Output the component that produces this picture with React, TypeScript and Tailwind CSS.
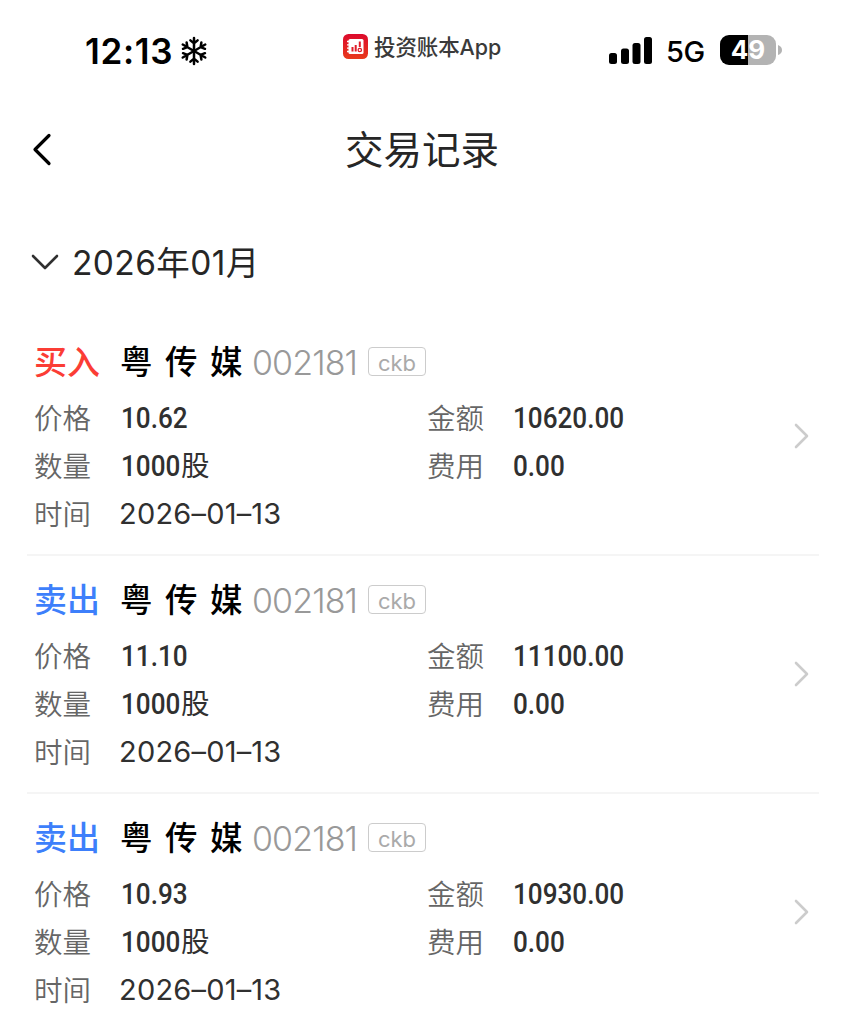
type Trade = { side: 'buy' | 'sell'; price: string; amount: string };

const trades: Trade[] = [
  { side: 'buy', price: '10.62', amount: '10620.00' },
  { side: 'sell', price: '11.10', amount: '11100.00' },
  { side: 'sell', price: '10.93', amount: '10930.00' },
];

function Snowflake() {
  return (
    <svg className="ml-[7px] mt-px h-[30px] w-[28px]" viewBox="-14 -15 28 30" fill="none" stroke="#000" strokeWidth="2.5" strokeLinecap="round">
      {[0, 60, 120, 180, 240, 300].map((a) => (
        <path key={a} transform={`rotate(${a})`} d="M0 0V-13M0 -7.6L-3.6 -10.6M0 -7.6L3.6 -10.6" />
      ))}
    </svg>
  );
}

function AppIcon() {
  return (
    <svg className="h-[25px] w-[25px]" viewBox="0 0 25 25">
      <defs>
        <linearGradient id="appRed" x1="0" y1="0" x2="0" y2="1">
          <stop offset="0" stopColor="#dc0a2c" />
          <stop offset="1" stopColor="#e93a1c" />
        </linearGradient>
      </defs>
      <rect width="25" height="25" rx="5.5" fill="url(#appRed)" />
      <rect x="5.5" y="5" width="15" height="15" rx="1.5" fill="#fff" />
      <path d="M4 7.5h3M4 10.8h3M4 14.2h3M4 17.5h3" stroke="#fff" strokeWidth="1.3" />
      <path d="M9.5 13v4.5M12.7 11v6.5" stroke="#e01c28" strokeWidth="2" />
      <path d="M16.8 7.5v5.5" stroke="#e01c28" strokeWidth="2" />
      <circle cx="16.8" cy="16" r="1.7" fill="none" stroke="#e01c28" strokeWidth="1.3" />
    </svg>
  );
}

function StatusBar() {
  return (
    <header className="flex h-[100px] items-center whitespace-nowrap leading-none">
      <div className="flex w-[343px] items-center pl-[85px]">
        <span className="w-[88px] pt-[2px] text-[35px] font-semibold tracking-[0.7px] text-black">12:13</span>
        <Snowflake />
      </div>
      <div className="flex w-[265px] items-center pb-[7px]">
        <AppIcon />
        <span className="ml-[6px] pt-[2px] text-[21.5px] font-medium tracking-[-0.1px] text-[#3a3a3a]">投资账本App</span>
      </div>
      <svg className="h-[27px] w-[45px]" viewBox="0 0 45 27">
        <rect x="1" y="16" width="8" height="11" rx="2.5" />
        <rect x="13" y="11.5" width="8" height="15.5" rx="2.5" />
        <rect x="24.5" y="6" width="8" height="21" rx="2.5" />
        <rect x="36" y="0" width="8" height="27" rx="2.5" />
      </svg>
      <span className="ml-[13px] w-[54px] pt-[3px] text-[29px] font-medium tracking-[-0.5px] text-black">5G</span>
      <div className="flex h-[30px] w-[56px] items-center justify-center rounded-[9px] bg-[linear-gradient(to_right,#000_28px,#b3b3b3_28px)] text-[26px] font-bold text-white">
        49
      </div>
      <svg className="ml-[2px] h-[10px] w-[4px]" viewBox="0 0 4 10">
        <path d="M0 0Q4 1.5 4 5T0 10Z" fill="#b3b3b3" />
      </svg>
    </header>
  );
}

function Din({ children }: { children: string }) {
  return (
    <span className="inline-block origin-left scale-x-[0.87] font-[Roboto,sans-serif] text-[30px] font-[550] text-[#303030]">
      {children}
    </span>
  );
}

function Label({ children, className = '' }: { children: string; className?: string }) {
  return <span className={`shrink-0 pt-[3px] text-[28.5px] font-[350] text-[#666] ${className}`}>{children}</span>;
}

function TradeRow({ trade }: { trade: Trade }) {
  const buy = trade.side === 'buy';
  return (
    <li className="mx-[27px] flex h-[238px] items-center border-b-2 border-[#f5f5f5] pl-[7px] pr-[9px] whitespace-nowrap leading-none">
      <div className="grow pt-[3px]">
        <div className="flex h-[48px] items-center">
          <span className={`w-[86px] pt-[2px] text-[33px] font-medium ${buy ? 'text-[#fb3d35]' : 'text-[#3d7ffb]'}`}>
            {buy ? '买入' : '卖出'}
          </span>
          <span className="w-[132px] pt-[4px] text-[32.5px] font-medium tracking-[12.5px] text-black">粤传媒</span>
          <span className="w-[116px] pt-[2px] text-[34px] font-[350] tracking-[-0.9px] text-[#999]">002181</span>
          <span className="flex h-[29px] w-[58px] items-center justify-center rounded-[4px] border-[1.5px] border-[#ccc] pt-[2px] text-[22px] text-[#aaa]">
            ckb
          </span>
        </div>
        <div className="mt-[8px] flex h-[48px] items-center">
          <Label className="w-[87px]">价格</Label>
          <div className="w-[306px]"><Din>{trade.price}</Din></div>
          <Label className="w-[86px]">金额</Label>
          <Din>{trade.amount}</Din>
        </div>
        <div className="flex h-[48px] items-center">
          <Label className="w-[87px]">数量</Label>
          <div className="flex w-[306px] items-center">
            <div className="w-[60px]"><Din>1000</Din></div>
            <span className="pt-[2px] text-[28.5px] text-[#303030]">股</span>
          </div>
          <Label className="w-[86px]">费用</Label>
          <Din>0.00</Din>
        </div>
        <div className="flex h-[48px] items-center">
          <Label className="w-[85px]">时间</Label>
          <span className="text-[29px] tracking-[0.2px] text-[#303030]">2026–01–13</span>
        </div>
      </div>
      <svg className="h-[28px] w-[17px] shrink-0" viewBox="0 0 17 28" fill="none" stroke="#ccc" strokeWidth="2.6" strokeLinecap="round" strokeLinejoin="round">
        <path d="M3 3L14 14L3 25" />
      </svg>
    </li>
  );
}

export default function App() {
  return (
    <main className="h-[1024px] w-[846px] overflow-hidden bg-white font-['Inter','Noto_Sans_CJK_SC',sans-serif]">
      <StatusBar />
      <nav className="flex h-[100px] items-center pl-[31px] leading-none">
        <svg className="h-[34px] w-[24px]" viewBox="0 0 24 34" fill="none" stroke="#000" strokeWidth="3.2" strokeLinecap="round" strokeLinejoin="round">
          <path d="M18 2.5L4 16.5L18 30.5" />
        </svg>
        <h1 className="ml-[290px] text-[38.5px] text-[#262626]">交易记录</h1>
      </nav>
      <section>
        <div className="flex h-[118px] items-center pl-[30px] pt-[6px] leading-none">
          <svg className="h-[18px] w-[30px]" viewBox="0 0 30 18" fill="none" stroke="#303030" strokeWidth="2.6" strokeLinecap="round" strokeLinejoin="round">
            <path d="M3 3L15 15L27 3" />
          </svg>
          <h2 className="ml-[12px] pt-[3px] text-[33.5px] font-normal tracking-[0.4px] text-[#262626]">2026年01月</h2>
        </div>
        <ul>
          {trades.map((t) => (
            <TradeRow key={t.amount} trade={t} />
          ))}
        </ul>
      </section>
    </main>
  );
}
